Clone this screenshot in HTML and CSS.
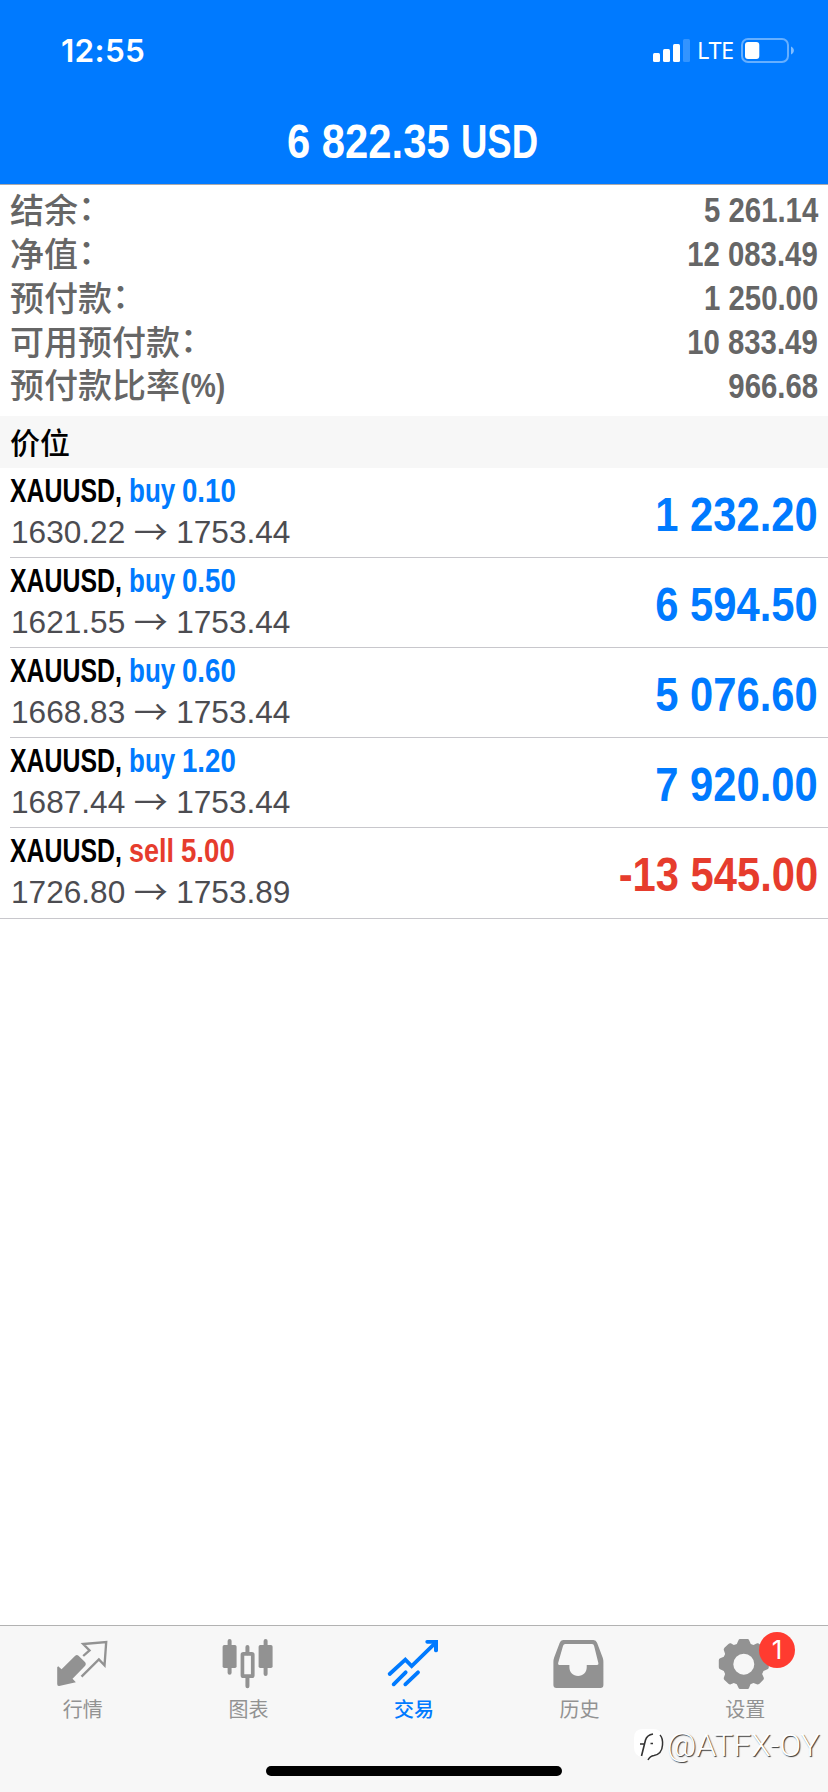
FILE: index.html
```html
<!DOCTYPE html>
<html lang="zh-CN">
<head>
<meta charset="utf-8">
<title>交易</title>
<link rel="stylesheet" href="styles.css">
</head>
<body>
<div class="screen">
  <header class="header">
    <div class="status">
      <span class="time">12:55</span>
      <div class="status-right">
        <svg class="signal" viewBox="0 0 37 23"><rect y="14" width="7" height="9" rx="1.5"/><rect x="10" y="10" width="7" height="13" rx="1.5"/><rect x="20" y="5" width="7" height="18" rx="1.5"/><rect x="30" width="7" height="23" rx="1.5" opacity=".2"/></svg>
        <span class="lte">LTE</span>
        <svg class="battery" viewBox="0 0 53 25"><rect x="1" y="1" width="46" height="23" rx="6" fill="none" stroke="#fff" stroke-width="2" opacity=".4"/><rect x="4" y="4" width="14.3" height="17" rx="3"/><path d="M50 8.500C53.800 10 53.800 15 50 16.500Z" opacity=".5"/></svg>
      </div>
    </div>
    <h1 class="title"><span class="cond title-num">6 822.35</span><span class="cond title-cur">USD</span></h1>
  </header>

  <section class="account">
    <div class="acc-row"><span>结余<i class="colon">：</i></span><b class="cond">5 261.14</b></div>
    <div class="acc-row"><span>净值<i class="colon">：</i></span><b class="cond">12 083.49</b></div>
    <div class="acc-row"><span>预付款<i class="colon">：</i></span><b class="cond">1 250.00</b></div>
    <div class="acc-row"><span>可用预付款<i class="colon">：</i></span><b class="cond">10 833.49</b></div>
    <div class="acc-row"><span>预付款比率<i class="cond pct">(%)</i></span><b class="cond">966.68</b></div>
  </section>

  <h2 class="section">价位</h2>

  <main class="positions">
    <div class="pos buy">
      <div class="info">
        <div class="name"><span class="cond sym">XAUUSD,</span><span class="cond side">buy</span><span class="cond vol">0.10</span></div>
        <div class="prices">1630.22<span class="arrow">→</span>1753.44</div>
      </div>
      <span class="cond profit">1 232.20</span>
    </div>
    <div class="pos buy">
      <div class="info">
        <div class="name"><span class="cond sym">XAUUSD,</span><span class="cond side">buy</span><span class="cond vol">0.50</span></div>
        <div class="prices">1621.55<span class="arrow">→</span>1753.44</div>
      </div>
      <span class="cond profit">6 594.50</span>
    </div>
    <div class="pos buy">
      <div class="info">
        <div class="name"><span class="cond sym">XAUUSD,</span><span class="cond side">buy</span><span class="cond vol">0.60</span></div>
        <div class="prices">1668.83<span class="arrow">→</span>1753.44</div>
      </div>
      <span class="cond profit">5 076.60</span>
    </div>
    <div class="pos buy">
      <div class="info">
        <div class="name"><span class="cond sym">XAUUSD,</span><span class="cond side">buy</span><span class="cond vol">1.20</span></div>
        <div class="prices">1687.44<span class="arrow">→</span>1753.44</div>
      </div>
      <span class="cond profit">7 920.00</span>
    </div>
    <div class="pos sell">
      <div class="info">
        <div class="name"><span class="cond sym">XAUUSD,</span><span class="cond side">sell</span><span class="cond vol">5.00</span></div>
        <div class="prices">1726.80<span class="arrow">→</span>1753.89</div>
      </div>
      <span class="cond profit">-13 545.00</span>
    </div>
  </main>

  <footer class="footer">
    <nav class="tabs">
      <div class="tab">
        <svg viewBox="158.4 72 180 180"><path d="M174 169L184 178L225 137Q230 133 235 137L255 157Q259 162 255 167L217 206L227 217L177 228Q171 229 171 222V172Z"/><path d="M249 138L268 121L249 102L318 96L313 166L296 148L244 200" fill="none" stroke="currentColor" stroke-width="7"/></svg>
        <span>行情</span>
      </div>
      <div class="tab">
        <svg viewBox="655.2 72 180 180"><rect x="669" y="105" width="42" height="69" rx="5"/><rect x="684" y="87" width="12" height="107" rx="6"/><rect x="777" y="105" width="42" height="69" rx="5"/><rect x="792" y="87" width="12" height="111" rx="6"/><rect x="728.500" y="131.500" width="31" height="67" rx="3" fill="none" stroke="currentColor" stroke-width="11"/><path d="M743.500 111V130M743.500 201V229" fill="none" stroke="currentColor" stroke-width="12" stroke-linecap="round"/></svg>
        <span>图表</span>
      </div>
      <div class="tab active">
        <svg viewBox="252 72 180 180"><path d="M269 192L316 149L335 168L407 98M281 223L317 187M316 223L354 187" fill="none" stroke="currentColor" stroke-width="11.500" stroke-linecap="round"/><path d="M381 90H414V122Q413 127 408 127Q403 127 402 122V101H381Q376 100 376 95.500Q376 91 381 90Z"/></svg>
        <span>交易</span>
      </div>
      <div class="tab">
        <svg viewBox="748.800 72 180 180"><path fill-rule="evenodd" d="M788 90H879Q887 90 890 98L907 143Q909 149 909 156V225Q909 234 900 234H768Q759 234 759 225V156Q759 149 761 143L778 98Q781 90 788 90ZM794 102Q790 102 788 107L773 160Q772 165 777 165H807V172C807 187 818 198 833 198C848 198 859 187 859 172V165H890Q895 165 894 160L881 107Q880 102 875 102Z"/></svg>
        <span>历史</span>
      </div>
      <div class="tab">
        <svg viewBox="345.600 72 180 180"><path fill-rule="evenodd" d="M421 87H443Q447 87 448 91L453 102L461 105L472 100Q476 99 479 102L490 113Q493 117 492 120L488 132L491 140L503 145Q507 147 507 151V172Q507 176 503 178L491 183L487 192L492 203Q493 207 490 210L479 221Q475 224 471 223L461 219L452 223L448 233Q447 237 443 237H421Q417 237 416 233L411 223L402 219L393 223Q389 224 386 221L374 210Q371 207 372 203L376 192L372 183L361 178Q357 176 357 172V151Q357 147 361 145L372 140L376 132L372 120Q371 117 374 113L386 102Q389 99 393 100L402 105L411 102L416 91Q417 87 421 87ZM432 131A31.500 31.500 0 1 0 432 194A31.500 31.500 0 1 0 432 131Z"/></svg>
        <span>设置</span>
        <i class="badge">1</i>
      </div>
    </nav>
    <div class="home"></div>
    <div class="watermark">
      <svg viewBox="0 0 32 36"><path d="M10 1H20Q29 1 29 10V19Q29 27 22 28L17 33L14 29H9Q1 28 1 19V10Q1 1 10 1Z" fill="#fff"/><path d="M8.500 28L12.500 12Q14 7 20 6M7 16H12M17.500 15.500H20" fill="none" stroke="#333" stroke-width="1.600"/><path d="M27 7Q30 10 29.500 17Q29 26 21 27.500Q17 28 15 32" fill="none" stroke="#333" stroke-width="1.500"/></svg>
      <span>@ATFX-OY</span>
    </div>
  </footer>
</div>
</body>
</html>
```
FILE: styles.css
```css
* { box-sizing: border-box; }
body { margin: 0; background: #fff; font-family: "Liberation Sans", "Noto Sans CJK SC", sans-serif; }
.screen { width: 828px; height: 1792px; display: flex; flex-direction: column; background: #fff; overflow: hidden; }

/* condensed bold face */
.cond { display: inline-block; white-space: pre; font-family: "Liberation Sans", sans-serif; font-weight: 700; font-style: normal; transform-origin: left center; }

.header { height: 185px; background: #007aff; border-bottom: 1px solid #a9a9ac; color: #fff; }
.status { height: 100px; padding: 0 34px 0 61px; display: flex; justify-content: space-between; align-items: center; }
.time { padding-top: 1px; font: 600 31.5px/40px Inter, sans-serif; letter-spacing: .3px; }
.status-right { display: flex; align-items: center; }
.status-right svg { fill: #fff; }
.signal { width: 37px; height: 23px; }
.lte { width: 51px; padding-left: 7px; font: 400 23.5px/30px "Noto Sans", sans-serif; letter-spacing: -.4px; }
.battery { width: 53px; height: 25px; }
.title { margin: 0; height: 82px; padding-left: 287px; display: flex; align-items: center; font-size: 49px; line-height: 82px; }
.title-num { width: 174px; transform: scaleX(.853); }
.title-cur { transform: scaleX(.745); }

.account { height: 231px; padding: 2px 10px 0; color: #666; }
.acc-row { height: 44px; display: flex; justify-content: space-between; align-items: center; font: 500 34px/44px "Noto Sans CJK SC", sans-serif; }
.acc-row b { padding-top: 1px; font-size: 35px; transform: scaleX(.838); transform-origin: right center; }
.colon { display: inline-block; font-style: normal; transform: translateY(-3px); }
.pct { font-size: 33.500px; width: 48px; margin-left: 1px; transform: translateY(-1px) scaleX(.85); }

.section { margin: 0; height: 52px; padding: 0 10px; background: #f7f7f7; font: 500 30px/50px "Noto Sans CJK SC", sans-serif; }

.positions { border-bottom: 1px solid #c8c7cc; height: 451px; }
.pos { height: 90px; margin-left: 10px; padding-right: 10px; border-bottom: 1px solid #c8c7cc; display: flex; justify-content: space-between; align-items: center; }
.pos:last-child { border-bottom: 0; }
.info { padding-top: 2px; height: 89px; }
.pos:last-child .info { height: 90px; }
.name { display: flex; height: 42px; font-size: 32.500px; line-height: 42px; }
.sym { width: 118.500px; transform: scaleX(.765); }
.side { width: 53.500px; transform: scaleX(.8); }
.vol { transform: scaleX(.85); }
.sell .side { width: 52px; transform: scaleX(.83); }
.prices { display: flex; height: 40px; padding-left: 1px; font-size: 31.600px; line-height: 41px; color: #4c4c51; }
.arrow { width: 51px; text-align: center; font-family: "Noto Sans CJK SC", sans-serif; font-size: 34px; line-height: 37px; }
.profit { padding-top: 2px; font-size: 49px; transform: scaleX(.852); transform-origin: right center; }
.buy .side, .buy .vol, .buy .profit { color: #007aff; }
.sell .side, .sell .vol, .sell .profit { color: #e63c2d; }

.footer { position: relative; margin-top: auto; height: 167px; background: #f7f7f7; border-top: 1px solid #b2b2b2; }
.tabs { display: flex; height: 140px; }
.tab { position: relative; flex: 1; padding-top: 8px; display: flex; flex-direction: column; align-items: center; color: #929292; font: 400 20px/30px "Noto Sans CJK SC", sans-serif; }
.tab svg { width: 60px; height: 60px; fill: currentColor; }
.tab.active { color: #007aff; font-weight: 500; }
.badge { position: absolute; left: 96.600px; top: 6px; width: 36px; height: 36px; border-radius: 50%; background: #ff3b30; color: #fff; text-align: center; font: 400 26px/36px Inter, sans-serif; }
.home { width: 296px; height: 10px; margin: 0 auto; border-radius: 5px; background: #000; }
.watermark { position: absolute; left: 633px; top: 102px; display: flex; color: #fff; font: 300 32px/34px Roboto, sans-serif; text-shadow: 1px 1px 1px #333; }
.watermark svg { width: 32px; height: 36px; margin-right: 2px; }
```
